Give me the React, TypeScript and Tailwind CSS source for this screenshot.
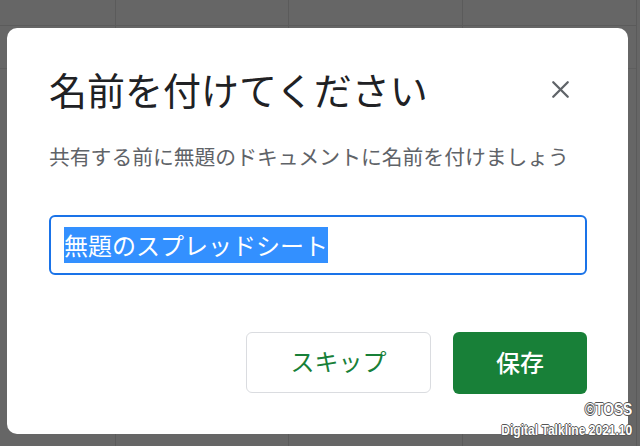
import { X } from 'lucide-react';

const columns = [116, 173, 174, 174];

export default function App() {
    return (
        <div className="relative w-[640px] h-[446px] overflow-hidden bg-[#666666] font-['Noto_Sans_CJK_JP','Noto_Sans',sans-serif]">
            {/* dimmed spreadsheet behind the dialog */}
            <div className="flex h-full">
                {columns.map((w, i) => (
                    <div key={i} className="h-full border-r border-[#5b5b5b] flex flex-col" style={{ width: w }}>
                        <div className="h-[26px] border-b border-[#5b5b5b]" />
                        <div className="h-[43px] border-b border-[#5e5e5e]" />
                    </div>
                ))}
            </div>

            <div className="absolute left-[7px] top-[28px] w-[621px] h-[406px] bg-white rounded-[10px] pl-[42px] pr-[41px] pt-[39px]">
                <div className="flex items-center justify-between h-[44px]">
                    <h1 className="text-[38px] leading-[44px] text-[#202124] font-normal">名前を付けてください</h1>
                    <button className="w-[36px] h-[36px] mr-[9px] flex items-center justify-center text-[#5f6368]">
                        <X size={29} strokeWidth={1.9} />
                    </button>
                </div>

                <p className="mt-[31px] text-[20.8px] leading-[28px] text-[#5f6368]">
                    共有する前に無題のドキュメントに名前を付けましょう
                </p>

                <div className="mt-[45px] h-[60px] border-2 border-[#1a73e8] rounded-[6px] pl-[13px] flex items-center">
                    <span className="bg-[#3390ff] text-white text-[24px] leading-[36px]">無題のスプレッドシート</span>
                </div>

                <div className="mt-[57px] flex justify-end gap-[22px]">
                    <button className="w-[185px] h-[61px] pb-[3px] border border-[#dadce0] rounded-[6px] text-[#188038] text-[24px] leading-none">
                        スキップ
                    </button>
                    <button className="w-[134px] h-[62px] pb-[3px] bg-[#188038] rounded-[6px] text-white text-[24px] leading-none font-medium">
                        保存
                    </button>
                </div>
            </div>

            <div className="absolute right-[8px] bottom-[5px] flex flex-col items-end origin-bottom-right scale-x-[0.86] text-white font-['Liberation_Sans',sans-serif] font-bold text-[14px] leading-[21px] [text-shadow:1px_0_#555,-1px_0_#555,0_1px_#555,0_-1px_#555]">
                <span className="text-[16px]">©TOSS</span>
                <span>Digital Talkline 2021.10</span>
            </div>
        </div>
    );
}
